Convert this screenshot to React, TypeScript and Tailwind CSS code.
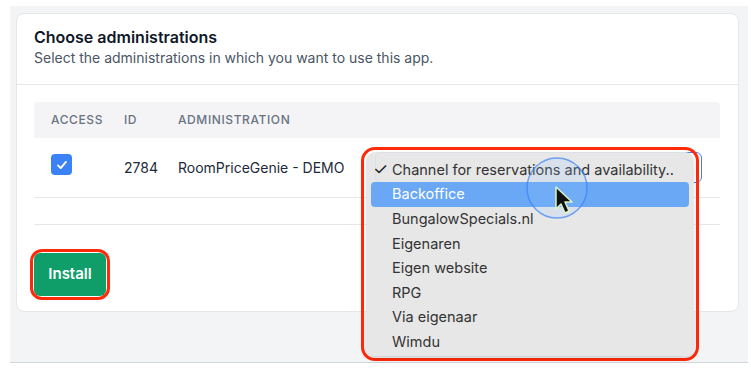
import React from 'react';

const options = [
  'Backoffice',
  'BungalowSpecials.nl',
  'Eigenaren',
  'Eigen website',
  'RPG',
  'Via eigenaar',
  'Wimdu',
];

const Cursor: React.FC = () => (
  <svg className="absolute left-[524px] top-[155px]" width="70" height="70" viewBox="0 0 70 70">
    <circle cx="33" cy="33" r="30" fill="rgba(147,197,253,0.18)" stroke="rgba(59,130,246,0.7)" strokeWidth="1.5" />
    <path
      d="M32 32 L32 54 L37 49 L41 58 L45 56 L41 47 L48 47 Z"
      fill="#111"
      stroke="#d9f5c4"
      strokeWidth="1.5"
      strokeLinejoin="round"
    />
  </svg>
);

const App: React.FC = () => {
  return (
    <div className="relative w-[751px] h-[375px] pt-[6px] bg-white font-['Inter',sans-serif] text-gray-900">
      <div className="ml-[10px] w-[738px] h-[357px] bg-[#f3f4f6] border-b border-gray-300 pl-[6px] pt-[7px]">
        <div className="w-[723px] h-[299px] bg-white rounded-lg border border-gray-200">
          {/* Header */}
          <div className="h-[71px] border-b border-gray-200 px-[17px] pt-[13px]">
            <h2 className="text-[16px] leading-[20px] font-semibold text-gray-900">Choose administrations</h2>
            <p className="text-[14px] leading-[20px] text-gray-600 mt-[1px]">
              Select the administrations in which you want to use this app.
            </p>
          </div>

          {/* Table */}
          <div className="px-[17px] pt-[17px]">
            <div className="w-[686px]">
              <div className="h-[36px] bg-[#f4f4f6] rounded-t flex items-center text-[12px] font-medium tracking-wider text-gray-500 uppercase">
                <div className="w-[90px] pl-[17px]">Access</div>
                <div className="w-[54px]">ID</div>
                <div>Administration</div>
              </div>
              <div className="h-[60px] border-b border-gray-200 flex items-center text-[14px] text-gray-800">
                <div className="w-[90px] pl-[17px]">
                  <div className="w-[21px] h-[21px] mb-[6px] rounded-[4px] bg-[#3b82f6] flex items-center justify-center">
                    <svg width="14" height="14" viewBox="0 0 16 16" fill="none">
                      <path d="M3.5 8.5 L6.5 11.5 L12.5 4.5" stroke="white" strokeWidth="2.2" strokeLinecap="round" strokeLinejoin="round" />
                    </svg>
                  </div>
                </div>
                <div className="w-[54px]">2784</div>
                <div className="flex-1 flex items-center pr-[18px]">
                  <span className="w-[197px]">RoomPriceGenie - DEMO</span>
                  <div className="flex-1 h-[31px] rounded-md border border-[#3b82f6] bg-white" />
                </div>
              </div>
              <div className="h-[27px] border-b border-gray-200" />
            </div>

            <div className="mt-[28px] relative inline-block">
              <button className="w-[72px] h-[43px] rounded-md bg-[#0f9d6a] text-white text-[15px] font-semibold">
                Install
              </button>
              <div className="absolute -left-[4px] -top-[4px] w-[80px] h-[51px] rounded-[12px] border-[3px] border-[#ff2a0a]" />
            </div>
          </div>
        </div>
      </div>

      {/* Native select popup */}
      <div className="absolute left-[361px] top-[147px] w-[338px] h-[214px] rounded-[14px] border-[3px] border-[#ff2a0a] p-[2px]">
        <div className="w-full h-full rounded-[9px] bg-[#e6e6e6]/95 shadow-md pt-[5px] px-[5px] text-[14.5px] text-[#333]">
          <div className="h-[25px] flex items-center">
            <span className="w-[16px] pl-[2px] text-[17px] leading-none text-[#222]">✓</span>
            <span className="pl-[5px] truncate">Channel for reservations and availability..</span>
          </div>
          {options.map((o, i) => (
            <div
              key={o}
              className={`h-[24.6px] flex items-center pl-[21px] rounded-[4px] ${
                i === 0 ? 'bg-[#6aa8f6] text-white' : ''
              }`}
            >
              {o}
            </div>
          ))}
        </div>
      </div>

      <Cursor />
    </div>
  );
};

export default App;
